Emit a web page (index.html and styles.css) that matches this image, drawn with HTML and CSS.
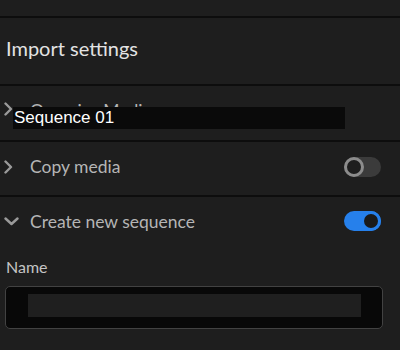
FILE: index.html
```html
<!DOCTYPE html>
<html lang="en">

<head>
  <meta charset="UTF-8">
  <meta name="viewport" content="width=device-width, initial-scale=1.0">
  <title>Import settings</title>
  <link rel="stylesheet" href="styles.css">
</head>

<body>
  <div class="panel">
    <div class="panel-top"></div>
    <header class="panel-header">
      <h1>Import settings</h1>
    </header>
    <section class="row row-organize">
      <span class="chevron chevron-right">
        <svg width="9" height="14" viewBox="0 0 9 14"><path d="M1.5 1.5 L7 7 L1.5 12.5" /></svg>
      </span>
      <span class="row-label">Organize Media</span>
      <div class="redact">Sequence 01</div>
    </section>
    <section class="row">
      <span class="chevron chevron-right">
        <svg width="9" height="14" viewBox="0 0 9 14"><path d="M1.5 1.5 L7 7 L1.5 12.5" /></svg>
      </span>
      <span class="row-label">Copy media</span>
      <span class="toggle"><span class="knob"></span></span>
    </section>
    <section class="row row-open">
      <span class="chevron chevron-down">
        <svg width="15" height="9" viewBox="0 0 15 9"><path d="M1.5 1.5 L7.5 7 L13.5 1.5" /></svg>
      </span>
      <span class="row-label">Create new sequence</span>
      <span class="toggle toggle-on"><span class="knob"></span></span>
    </section>
    <div class="field">
      <label class="field-label">Name</label>
      <div class="field-input">
        <div class="field-value"></div>
      </div>
    </div>
  </div>
</body>

</html>
```

FILE: styles.css
```css
html {
  box-sizing: border-box;
  font-family: 'Lato', sans-serif;
  font-size: 16px;
}

*,
*:after,
*:before {
  box-sizing: inherit;
}

body {
  margin: 0;
  background-color: #1e1e1e;
}

.panel {
  width: 400px;
  height: 350px;
  overflow: hidden;
  background-color: #1e1e1e;
}

.panel-top {
  height: 18px;
  border-bottom: 2px solid #0d0d0d;
}

.panel-header {
  height: 68px;
  display: flex;
  align-items: center;
  padding: 0 0 6px 6px;
  border-bottom: 2px solid #0d0d0d;
}

.panel-header h1 {
  margin: 0;
  font-size: 20px;
  font-weight: 400;
  color: #e3e3e3;
}

.row {
  position: relative;
  height: 55px;
  display: flex;
  align-items: center;
  padding: 0 19px 4px 4px;
  border-bottom: 2px solid #0d0d0d;
}

.row-organize {
  height: 56px;
}

.row-open {
  border-bottom: none;
  height: 48px;
  padding-bottom: 0;
}

.chevron {
  width: 26px;
  display: flex;
  align-items: center;
}

.chevron svg path {
  fill: none;
  stroke: #9a9a9a;
  stroke-width: 2.4;
  stroke-linecap: round;
  stroke-linejoin: round;
}

.row-label {
  flex: 1;
  font-size: 17.5px;
  color: #b5b5b5;
}

.row-organize .row-label {
  position: relative;
  top: -1px;
}

.row-organize .chevron {
  position: relative;
  top: -2px;
}

.redact {
  position: absolute;
  left: 13px;
  top: 21px;
  width: 332px;
  height: 22px;
  background-color: #0a0a0a;
  color: #fff;
  font-family: 'Liberation Sans', Arial, sans-serif;
  font-size: 17px;
  line-height: 22px;
  padding-left: 1px;
}

.toggle {
  width: 37px;
  height: 20px;
  border-radius: 10px;
  background-color: #3b3b3b;
  display: flex;
  align-items: center;
}

.knob {
  width: 20px;
  height: 20px;
  border-radius: 50%;
  border: 3px solid #8c8c8c;
  background-color: #1e1e1e;
}

.toggle-on {
  background-color: #2680eb;
  justify-content: flex-end;
}

.toggle-on .knob {
  border-color: #2680eb;
  background-color: #1a1a1a;
}

.field {
  padding: 12px 17px 0 5px;
}

.field-label {
  display: block;
  font-size: 16px;
  color: #c4c4c4;
  padding-left: 1px;
  margin-bottom: 10px;
}

.field-input {
  height: 43px;
  border: 1px solid #424242;
  border-radius: 5px;
  background-color: #080808;
  padding: 7px 21px 0 22px;
}

.field-value {
  height: 23px;
  background-color: #1f1f1f;
}
```
